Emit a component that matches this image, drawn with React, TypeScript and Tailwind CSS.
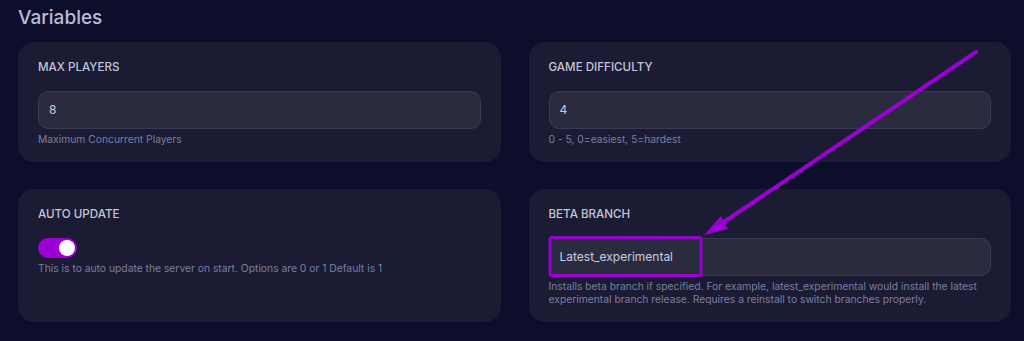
import { useState } from 'react'

interface VarCardProps {
  label: string
  hint: string
  children: React.ReactNode
}

function VarCard({ label, hint, children }: VarCardProps) {
  return (
    <div className="bg-[#1b1b34] rounded-[16px] px-5 pt-[15px] flex flex-col">
      <div className="text-[11.6px] leading-5 font-medium text-[#c3c6d8]">{label}</div>
      {children}
      <p className="text-[10.3px] leading-[13px] text-[#7b7ea0] mt-[4px] pr-1">{hint}</p>
    </div>
  )
}

function TextInput({ value }: { value: string }) {
  return (
    <div className="mt-[14px] h-[38px] rounded-[10px] bg-[#2b2b40] border border-[#3a3a52] flex items-center px-[10px] text-[12px] text-[#c9cce0]">
      {value}
    </div>
  )
}

export default function App() {
  const [autoUpdate, setAutoUpdate] = useState(true)

  return (
    <div
      className="relative w-[1024px] h-[341px] bg-[#0d0e2b] overflow-hidden pl-[18px] pr-[13px] pt-1"
      style={{ fontFamily: 'Inter, "Noto Sans", sans-serif' }}
    >
      <h1 className="text-[19px] leading-7 font-medium text-[#b9bdd5]">Variables</h1>

      <div className="mt-[10px] grid grid-cols-2 gap-x-[28px] gap-y-[27px] grid-rows-[120px_133px]">
        <VarCard label="MAX PLAYERS" hint="Maximum Concurrent Players">
          <TextInput value="8" />
        </VarCard>

        <VarCard label="GAME DIFFICULTY" hint="0 - 5, 0=easiest, 5=hardest">
          <TextInput value="4" />
        </VarCard>

        <VarCard label="AUTO UPDATE" hint="This is to auto update the server on start. Options are 0 or 1 Default is 1">
          <button
            onClick={() => setAutoUpdate(!autoUpdate)}
            className={`mt-[14px] w-[39px] h-[20px] rounded-full flex items-center px-[2px] ${
              autoUpdate ? 'bg-[#9c00d4] justify-end' : 'bg-[#3a3a52] justify-start'
            }`}
          >
            <span className="w-4 h-4 rounded-full bg-white block" />
          </button>
        </VarCard>

        <VarCard
          label="BETA BRANCH"
          hint="Installs beta branch if specified. For example, latest_experimental would install the latest experimental branch release. Requires a reinstall to switch branches properly."
        >
          <TextInput value="Latest_experimental" />
        </VarCard>
      </div>

      {/* annotation overlay */}
      <svg className="absolute inset-0 pointer-events-none" width="1024" height="341" viewBox="0 0 1024 341">
        <rect x="550" y="237.5" width="151" height="38" rx="2" fill="none" stroke="#9a00d2" strokeWidth="3" />
        <line x1="976" y1="52" x2="718" y2="226" stroke="#9a00d2" strokeWidth="4" strokeLinecap="round" />
        <polygon points="704,235 721,216 728,229" fill="#9a00d2" />
      </svg>
    </div>
  )
}
